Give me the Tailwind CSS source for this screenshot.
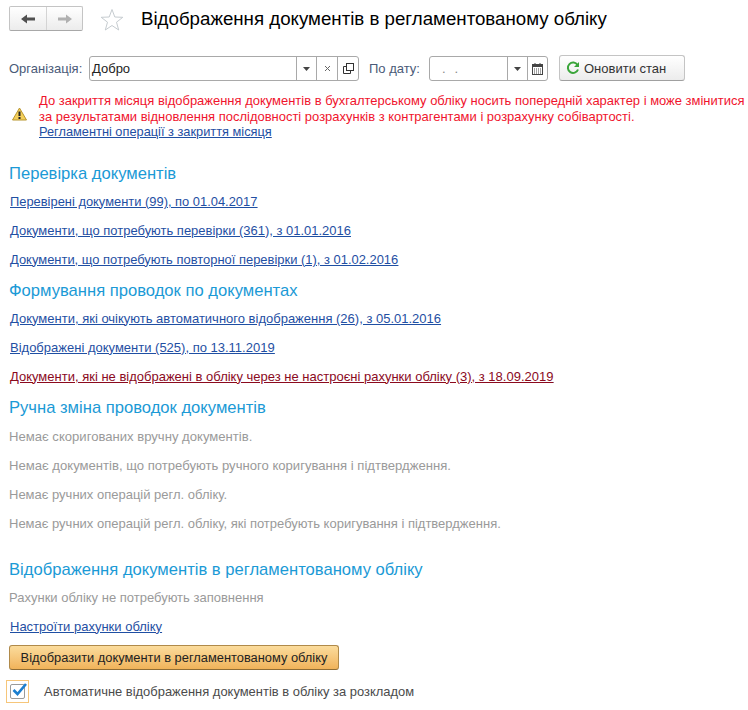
<!DOCTYPE html>
<html><head><meta charset="utf-8"><script src="https://cdn.jsdelivr.net/npm/@tailwindcss/browser@4"></script></head>
<body class="bg-white">
<div class="w-[748px] h-[710px] overflow-hidden font-['Liberation_Sans',Arial,sans-serif] text-[13px] leading-[15px] text-[#4b4b4b]">
  <div class="flex items-center h-[25px] mt-[6px] ml-[9px]">
    <div class="flex w-[74px] h-[25px] rounded-[2px] border border-[#c4c4c4] border-b-[#a8a8a8] bg-gradient-to-b from-white to-[#ececec]">
      <div class="w-[37px] flex items-center justify-center border-r border-[#d4d4d4]">
        <svg width="16" height="12" viewBox="0 0 16 12"><path d="M1 6 L7 1.5 V4.5 H15 V7.5 H7 V10.5 Z" fill="#505050"/></svg>
      </div>
      <div class="flex-1 flex items-center justify-center">
        <svg width="16" height="12" viewBox="0 0 16 12"><path d="M15 6 L9 1.5 V4.5 H1 V7.5 H9 V10.5 Z" fill="#b0b0b0"/></svg>
      </div>
    </div>
    <svg class="ml-[17px] mt-[2px]" width="24" height="24" viewBox="0 0 24 24"><path d="M12 1.5 L14.8 9 L22.8 9.3 L16.5 14.2 L18.7 22 L12 17.5 L5.3 22 L7.5 14.2 L1.2 9.3 L9.2 9 Z" fill="#fff" stroke="#c6ccd0" stroke-width="1"/></svg>
    <h1 class="ml-[17px] text-[18.7px] leading-[28px] text-black">Відображення документів в регламентованому обліку</h1>
  </div>

  <div class="flex items-start h-[26px] mt-[24px] ml-[9px]">
    <span class="w-[80px] leading-[27px] text-[#4a5a78]">Організація:</span>
    <div class="flex w-[270px] h-[25px] mt-[1px] border border-[#a9a9a9] rounded-[3px] text-[#222]">
      <div class="w-[206px] pl-[2px] flex items-center">Добро</div>
      <div class="w-[20px] border-l border-[#a9a9a9] flex items-center justify-center"><svg width="7" height="4" viewBox="0 0 7 4"><path d="M0 0H7L3.5 4Z" fill="#444"/></svg></div>
      <div class="w-[21px] border-l border-[#a9a9a9] flex items-center justify-center"><svg width="7" height="7" viewBox="0 0 7 7"><path d="M1 1L6 6M6 1L1 6" stroke="#666" stroke-width="1"/></svg></div>
      <div class="flex-1 border-l border-[#a9a9a9] flex items-center justify-center"><svg width="11" height="11" viewBox="0 0 11 11" fill="none" stroke="#333"><rect x="3.5" y="0.5" width="7" height="7"/><path d="M3.5 3.5H0.5V10.5H7.5V7.5"/></svg></div>
    </div>
    <span class="ml-[10px] w-[60px] leading-[27px] text-[#4a5a78]">По дату:</span>
    <div class="flex w-[119px] h-[25px] mt-[1px] border border-[#a9a9a9] rounded-[3px] text-[#888]">
      <div class="w-[77px] pl-[12px] flex items-center tracking-[9px]">..</div>
      <div class="w-[20px] border-l border-[#a9a9a9] flex items-center justify-center"><svg width="7" height="4" viewBox="0 0 7 4"><path d="M0 0H7L3.5 4Z" fill="#444"/></svg></div>
      <div class="flex-1 border-l border-[#a9a9a9] flex items-center justify-center"><svg width="11" height="12" viewBox="0 0 11 12"><path d="M3 0V2M8 0V2" stroke="#444"/><rect x="0.5" y="1.5" width="10" height="10" fill="#fff" stroke="#444"/><path d="M0.5 1.5H10.5V4H0.5Z" fill="#444"/><path d="M2 6H9M2 8H9M2 10H9" stroke="#444" stroke-dasharray="1 1"/></svg></div>
    </div>
    <button class="ml-[11px] w-[126px] h-[26px] flex items-center pl-[6px] rounded-[3px] border border-[#c4c4c4] border-b-[#a0a0a0] bg-gradient-to-b from-white to-[#ececec] text-[#333]">
      <svg width="14" height="14" viewBox="0 0 14 14" fill="none"><path d="M11.5 4 A5.2 5.2 0 1 0 12 8.5" stroke="#3aa53a" stroke-width="2"/><path d="M13 1V6H8Z" fill="#3aa53a"/></svg>
      <span class="ml-[4px]">Оновити стан</span>
    </button>
  </div>

  <div class="flex mt-[12px] ml-[12px] w-[760px]">
    <svg class="mt-[14px]" width="15" height="14" viewBox="0 0 15 14"><path d="M7.5 1 L14.5 13 H0.5 Z" fill="#f4cf5a" stroke="#b8952f"/><path d="M7.5 4.5V9M7.5 10V12" stroke="#222" stroke-width="2"/></svg>
    <div class="ml-[12px] w-[720px] leading-[15.5px] text-[12.97px]">
      <p class="text-[#f0142d] whitespace-nowrap">До закриття місяця відображення документів в бухгалтерському обліку носить попередній характер і може змінитися</p>
      <p class="text-[#f0142d] whitespace-nowrap">за результатами відновлення послідовності розрахунків з контрагентами і розрахунку собівартості.</p>
      <a class="text-[#1f4fa3] underline text-[12.8px]">Регламентні операції з закриття місяця</a>
    </div>
  </div>

  <div class="ml-[9px] mt-[24px] text-[16.6px] leading-[20px] text-[#1b9ad6]">Перевірка документів</div>
  <div class="ml-[10px] mt-[10px] flex flex-col gap-[14px] text-[#1f4fa3] underline">
    <a class="text-[12.9px]">Перевірені документи (99), по 01.04.2017</a>
    <a class="text-[12.98px]">Документи, що потребують перевірки (361), з 01.01.2016</a>
    <a class="text-[12.95px]">Документи, що потребують повторної перевірки (1), з 01.02.2016</a>
  </div>
  <div class="ml-[9px] mt-[14px] text-[16.6px] leading-[20px] text-[#1b9ad6]">Формування проводок по документах</div>
  <div class="ml-[10px] mt-[10px] flex flex-col gap-[14px] text-[#1f4fa3] underline">
    <a>Документи, які очікують автоматичного відображення (26), з 05.01.2016</a>
    <a>Відображені документи (525), по 13.11.2019</a>
    <a class="text-[#8b0a1e]">Документи, які не відображені в обліку через не настроєні рахунки обліку (3), з 18.09.2019</a>
  </div>
  <div class="ml-[9px] mt-[14px] text-[16.6px] leading-[20px] text-[#1b9ad6]">Ручна зміна проводок документів</div>
  <div class="ml-[9px] mt-[11px] flex flex-col gap-[14px] text-[#9a9a9a]">
    <p class="text-[13.1px]">Немає скоригованих вручну документів.</p>
    <p class="text-[13.1px]">Немає документів, що потребують ручного коригування і підтвердження.</p>
    <p>Немає ручних операцій регл. обліку.</p>
    <p>Немає ручних операцій регл. обліку, які потребують коригування і підтвердження.</p>
  </div>
  <div class="ml-[9px] mt-[29px] text-[16.6px] leading-[20px] text-[#1b9ad6]">Відображення документів в регламентованому обліку</div>
  <p class="ml-[9px] mt-[10px] text-[#9a9a9a]">Рахунки обліку не потребують заповнення</p>
  <a class="block ml-[10px] mt-[14px] text-[#1f4fa3] underline">Настроїти рахунки обліку</a>
  <button class="block ml-[9px] mt-[11px] w-[330px] h-[25px] rounded-[3px] border border-[#b08a4a] border-b-[#8f6d35] bg-gradient-to-b from-[#fbdc9c] to-[#f0b35a] text-[12.85px] text-[#222]">Відобразити документи в регламентованому обліку</button>
  <div class="flex items-center ml-[6px] mt-[10px]">
    <div class="w-[23px] h-[23px] border border-[#f6c67a] flex items-center justify-center">
      <div class="relative w-[15px] h-[15px] border border-[#9a9a9a] rounded-[2px] bg-white">
        <svg class="absolute -top-[4px] left-0" width="17" height="17" viewBox="0 0 17 17" fill="none"><path d="M2.5 9 L6.5 13 L15 3" stroke="#1b7fd0" stroke-width="2.6"/></svg>
      </div>
    </div>
    <span class="ml-[15px] text-[12.95px] text-[#4b4b4b]">Автоматичне відображення документів в обліку за розкладом</span>
  </div>
</div>
</body></html>
